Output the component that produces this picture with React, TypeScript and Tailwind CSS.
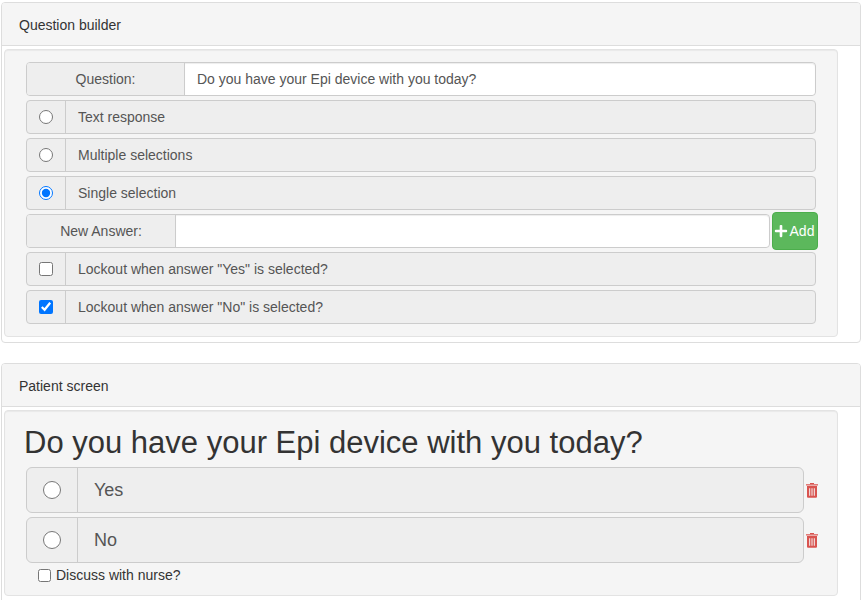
import { FaPlus } from "react-icons/fa";

const font = { fontFamily: '"Liberation Sans", Arial, sans-serif' };

function Trash() {
  return (
    <svg viewBox="0 0 12 15" width="12" height="15" className="ml-[2px] text-[#d9534f]" fill="currentColor" fillRule="evenodd">
      <path d="M4 0h4v1H4z" />
      <path d="M0 1h12v1.6H0z" opacity="0.75" />
      <path d="M1 3h10v10.8a1 1 0 0 1-1 1H2a1 1 0 0 1-1-1zM3.2 5.2v7.6h1v-7.6zM5.5 5.2v7.6h1v-7.6zM7.8 5.2v7.6h1v-7.6z" />
    </svg>
  );
}

function OptionRow({ type, label, checked }: { type: "radio" | "checkbox"; label: string; checked?: boolean }) {
  return (
    <div className="flex h-[34px] w-[790px] rounded-[4px] border border-[#ccc] bg-[#eee] text-[14px] text-[#555]">
      <div className="flex w-[39px] shrink-0 items-center justify-center border-r border-[#ccc]">
        <input type={type} checked={!!checked} readOnly className="m-0 h-[14px] w-[14px]" />
      </div>
      <div className="flex items-center pl-3">{label}</div>
    </div>
  );
}

function AnswerRow({ label }: { label: string }) {
  return (
    <div className="flex items-center">
      <div className="flex h-[46px] w-[778px] rounded-[6px] border border-[#ccc] bg-[#eee] text-[18px] text-[#555]">
        <div className="flex w-[51px] shrink-0 items-center justify-center border-r border-[#ccc]">
          <input type="radio" readOnly checked={false} className="m-0 h-[18px] w-[18px]" />
        </div>
        <div className="flex items-center pl-4">{label}</div>
      </div>
      <Trash />
    </div>
  );
}

function Panel({ title, className, children }: { title: string; className: string; children: React.ReactNode }) {
  return (
    <section className={`w-[860px] rounded-[4px] border border-[#ddd] bg-white ${className}`}>
      <div className="flex h-[43px] items-center rounded-t-[3px] border-b border-[#ddd] bg-[#f5f5f5] pl-[17px] pt-[2px] text-[14px] text-[#333]">
        {title}
      </div>
      <div className="pl-[2px] pt-[3px]">{children}</div>
    </section>
  );
}

function LabeledInput({ label, width, inputWidth, value }: { label: string; width: string; inputWidth: string; value?: string }) {
  return (
    <div className={`flex h-[34px] ${inputWidth} rounded-[4px] border border-[#ccc] text-[14px] text-[#555]`}>
      <div className={`flex ${width} shrink-0 items-center justify-center rounded-l-[3px] border-r border-[#ccc] bg-[#eee]`}>{label}</div>
      <input
        readOnly
        value={value ?? ""}
        className="min-w-0 flex-1 rounded-r-[4px] bg-white px-3 text-[14px] text-[#555] shadow-[inset_0_1px_1px_rgba(0,0,0,0.075)] outline-none"
      />
    </div>
  );
}

export default function App() {
  return (
    <div className="h-[600px] overflow-hidden bg-white pl-[1px] pt-[2px]" style={font}>
      <Panel title="Question builder" className="h-[341px]">
        <div className="flex h-[288px] w-[834px] flex-col gap-1 rounded-[4px] border border-[#e3e3e3] bg-[#f5f5f5] py-3 pl-[21px] shadow-[inset_0_1px_1px_rgba(0,0,0,0.05)]">
          <LabeledInput label="Question:" width="w-[158px]" inputWidth="w-[790px]" value="Do you have your Epi device with you today?" />
          <OptionRow type="radio" label="Text response" />
          <OptionRow type="radio" label="Multiple selections" />
          <OptionRow type="radio" label="Single selection" checked />
          <div className="-my-[2px] flex h-[38px] items-center gap-[2px]">
            <LabeledInput label="New Answer:" width="w-[149px]" inputWidth="w-[744px]" />
            <button className="flex h-[38px] w-[46px] items-center justify-center gap-[2px] rounded-[4px] border border-[#4cae4c] bg-[#5cb85c] text-[14px] text-white">
              <FaPlus size={14} className="-ml-[2px]" />
              Add
            </button>
          </div>
          <OptionRow type="checkbox" label={'Lockout when answer "Yes" is selected?'} />
          <OptionRow type="checkbox" label={'Lockout when answer "No" is selected?'} checked />
        </div>
      </Panel>
      <Panel title="Patient screen" className="mt-[20px] h-[260px]">
        <div className="flex h-[186px] w-[834px] flex-col rounded-[4px] border border-[#e3e3e3] bg-[#f5f5f5] pl-[21px] shadow-[inset_0_1px_1px_rgba(0,0,0,0.05)]">
          <h1 className="-ml-[2px] mt-[15px] mb-[8px] text-[31px] leading-[33px] text-[#333]">Do you have your Epi device with you today?</h1>
          <div className="flex flex-col gap-1">
            <AnswerRow label="Yes" />
            <AnswerRow label="No" />
          </div>
          <label className="ml-3 mt-[4px] flex items-center gap-[5px] text-[14px] leading-[16px] text-[#333]">
            <input type="checkbox" readOnly checked={false} className="m-0 h-[13px] w-[13px]" />
            Discuss with nurse?
          </label>
        </div>
      </Panel>
    </div>
  );
}
